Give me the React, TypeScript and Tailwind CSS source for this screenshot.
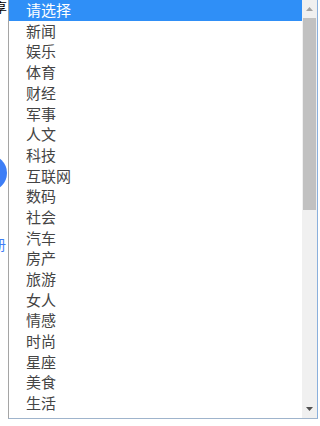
import React from 'react';

const options = [
  '请选择', '新闻', '娱乐', '体育', '财经', '军事', '人文', '科技', '互联网', '数码',
  '社会', '汽车', '房产', '旅游', '女人', '情感', '时尚', '星座', '美食', '生活',
];

const font = { fontFamily: '"Microsoft YaHei", "Noto Sans CJK SC", "Noto Sans", sans-serif' };

const App = () => {
  return (
    <div className="relative w-[320px] h-[426px] bg-white overflow-hidden" style={font}>
      {/* page behind the open select */}
      <div className="flex flex-col">
        <div className="-ml-[6px] h-[14px] text-[13px] leading-[14px] text-black">享</div>
        <div className="mt-[141px] -ml-[29px] w-[36px] h-[36px] rounded-full bg-[#3d7ef6]" />
        <div className="mt-[45px] -ml-[8px] text-[14px] leading-[16px] text-[#3d7ef6]">册</div>
      </div>

      {/* dropdown list */}
      <div className="absolute left-[8px] top-0 w-[310px] h-[419px] bg-white border-l border-r border-b border-l-[#a5a5a5] border-r-[#8ab0dc] border-b-[#9fb4cc] flex">
        <ul className="flex-1 flex flex-col">
          {options.map((o, i) => (
            <li
              key={o}
              className={
                i === 0
                  ? 'h-[20.7px] flex items-center pl-[17px] text-[15px] bg-[#2f8ff7] text-white'
                  : 'h-[20.7px] flex items-center pl-[17px] text-[15px] text-[#444]'
              }
            >
              {o}
            </li>
          ))}
        </ul>
        <div className="w-[15px] bg-[#f0f0f0] flex flex-col">
          <div className="h-[18px] flex items-center justify-center">
            <svg width="7" height="4" viewBox="0 0 7 4">
              <path d="M0 4 L3.5 0 L7 4 Z" fill="#a3a3a3" />
            </svg>
          </div>
          <div className="h-[192px] mx-[1px] bg-[#c1c1c1]" />
          <div className="flex-1" />
          <div className="h-[18px] flex items-center justify-center">
            <svg width="7" height="4" viewBox="0 0 7 4">
              <path d="M0 0 L7 0 L3.5 4 Z" fill="#505050" />
            </svg>
          </div>
        </div>
      </div>
    </div>
  );
};

export default App;
